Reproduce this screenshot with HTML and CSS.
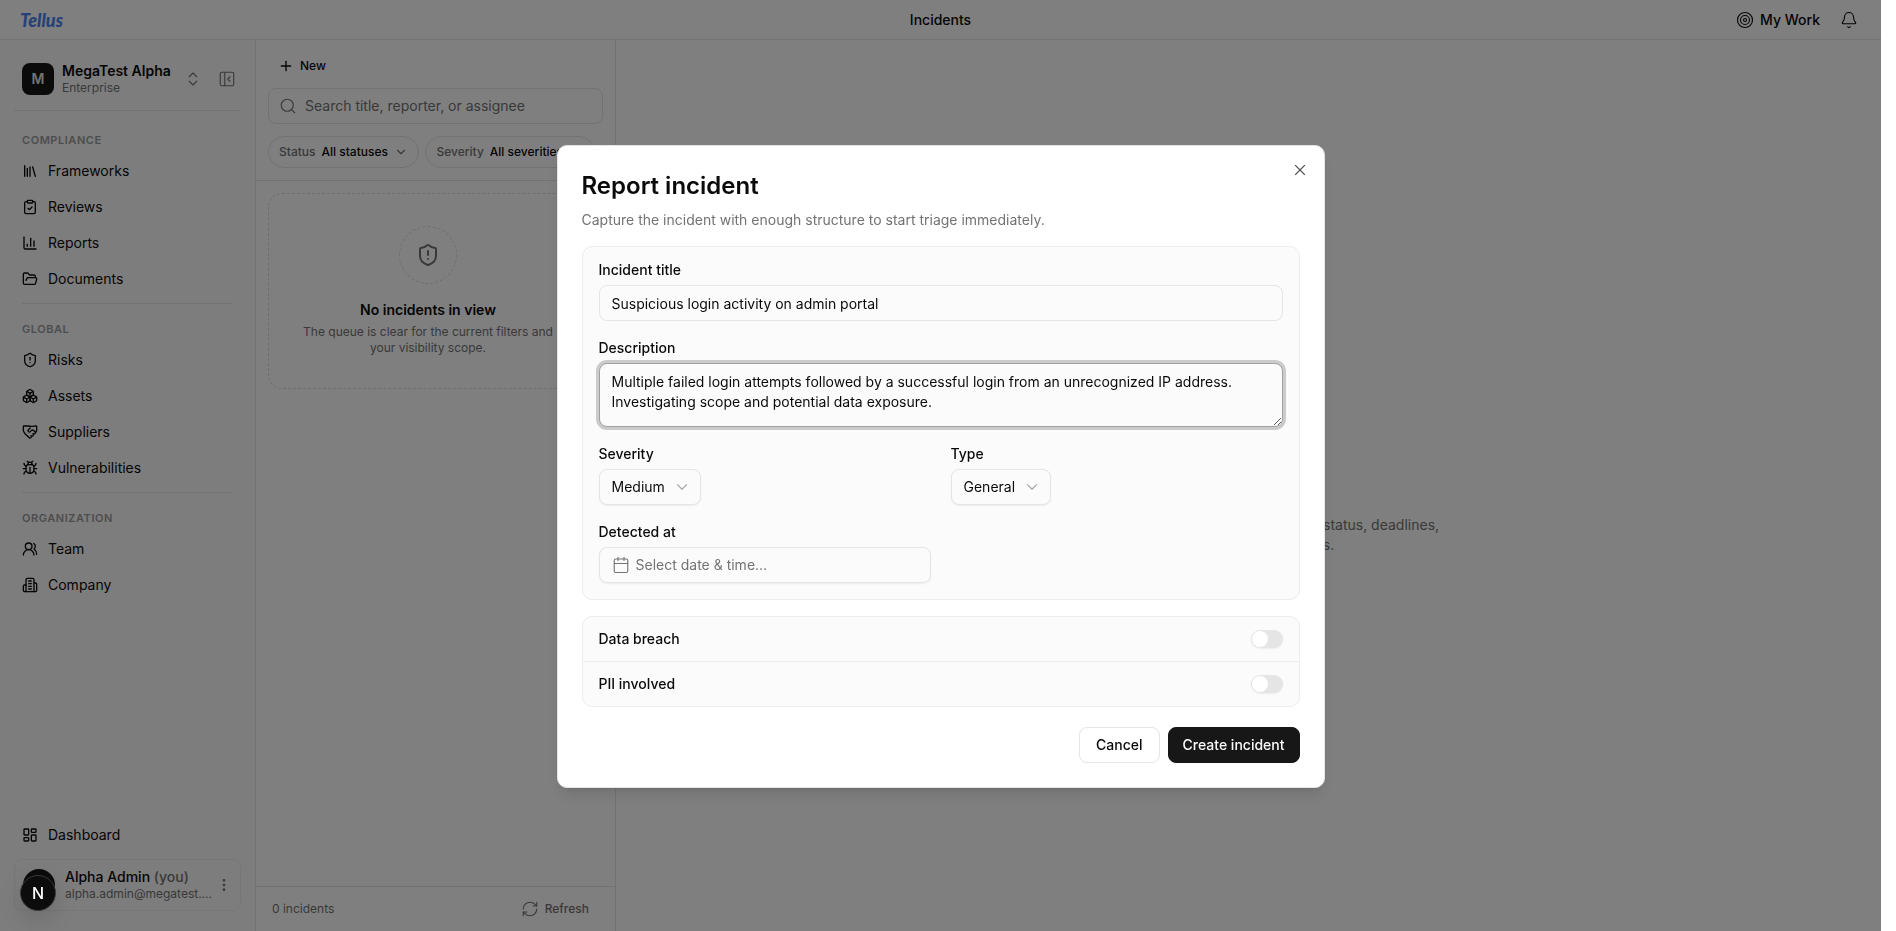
FILE: index.html
```html
<!DOCTYPE html>
<html lang="en">
<head>
    <meta charset="UTF-8">
    <meta name="viewport" content="width=device-width, initial-scale=1.0">
    <title>Incidents - Tellus</title>
    <link rel="stylesheet" href="styles.css">
</head>
<body>
    <div class="app">
        <header class="topbar">
            <a href="#" class="logo">Tellus</a>
            <h1>Incidents</h1>
            <div class="topbar-actions">
                <a href="#" class="my-work">
                    <svg class="icon icon-light" viewBox="0 0 24 24"><circle cx="12" cy="12" r="10"/><circle cx="12" cy="12" r="6"/><circle cx="12" cy="12" r="2"/></svg>
                    My Work
                </a>
                <button type="button" aria-label="Notifications">
                    <svg class="icon icon-light" viewBox="0 0 24 24"><path d="M10.268 21a2 2 0 0 0 3.464 0"/><path d="M3.262 15.326A1 1 0 0 0 4 17h16a1 1 0 0 0 .74-1.673C19.41 13.956 18 12.499 18 8A6 6 0 0 0 6 8c0 4.499-1.411 5.956-2.738 7.326"/></svg>
                </button>
            </div>
        </header>

        <div class="columns">
            <aside class="sidebar">
                <div class="workspace">
                    <span class="workspace-avatar">M</span>
                    <div class="workspace-name">
                        <strong>MegaTest Alpha</strong>
                        <span>Enterprise</span>
                    </div>
                    <button type="button" aria-label="Switch workspace">
                        <svg class="icon icon-light" viewBox="0 0 24 24"><path d="m7 15 5 5 5-5"/><path d="m7 9 5-5 5 5"/></svg>
                    </button>
                    <button type="button" aria-label="Collapse sidebar">
                        <svg class="icon icon-light" viewBox="0 0 24 24"><rect width="18" height="18" x="3" y="3" rx="2"/><path d="M9 3v18"/><path d="m16 15-3-3 3-3"/></svg>
                    </button>
                </div>

                <nav>
                    <section class="nav-group">
                        <h2>COMPLIANCE</h2>
                        <a href="#"><svg class="icon" viewBox="0 0 24 24"><path d="m16 6 4 14"/><path d="M12 6v14"/><path d="M8 8v12"/><path d="M4 4v16"/></svg>Frameworks</a>
                        <a href="#"><svg class="icon" viewBox="0 0 24 24"><rect width="8" height="4" x="8" y="2" rx="1"/><path d="M16 4h2a2 2 0 0 1 2 2v14a2 2 0 0 1-2 2H6a2 2 0 0 1-2-2V6a2 2 0 0 1 2-2h2"/><path d="m9 14 2 2 4-4"/></svg>Reviews</a>
                        <a href="#"><svg class="icon" viewBox="0 0 24 24"><path d="M3 3v16a2 2 0 0 0 2 2h16"/><path d="M18 17V9"/><path d="M13 17V5"/><path d="M8 17v-3"/></svg>Reports</a>
                        <a href="#"><svg class="icon" viewBox="0 0 24 24"><path d="m6 14 1.5-2.9A2 2 0 0 1 9.24 10H20a2 2 0 0 1 1.94 2.5l-1.54 6a2 2 0 0 1-1.95 1.5H4a2 2 0 0 1-2-2V5a2 2 0 0 1 2-2h3.9a2 2 0 0 1 1.69.9l.81 1.2a2 2 0 0 0 1.67.9H18a2 2 0 0 1 2 2v2"/></svg>Documents</a>
                    </section>
                    <section class="nav-group">
                        <h2>GLOBAL</h2>
                        <a href="#"><svg class="icon" viewBox="0 0 24 24"><path d="M20 13c0 5-3.5 7.5-7.66 8.95a1 1 0 0 1-.67-.01C7.5 20.5 4 18 4 13V6a1 1 0 0 1 1-1c2 0 4.5-1.2 6.24-2.72a1.17 1.17 0 0 1 1.52 0C14.51 3.81 17 5 19 5a1 1 0 0 1 1 1z"/><path d="M12 8v4"/><path d="M12 16h.01"/></svg>Risks</a>
                        <a href="#"><svg class="icon" viewBox="0 0 24 24"><path d="M2.97 12.92A2 2 0 0 0 2 14.63v3.24a2 2 0 0 0 .97 1.71l3 1.8a2 2 0 0 0 2.06 0L12 19v-5.5l-5-3-4.03 2.42Z"/><path d="m7 16.5-4.74-2.85"/><path d="m7 16.5 5-3"/><path d="M7 16.5v5.17"/><path d="M12 13.5V19l3.97 2.38a2 2 0 0 0 2.06 0l3-1.8a2 2 0 0 0 .97-1.71v-3.24a2 2 0 0 0-.97-1.71L17 10.5l-5 3Z"/><path d="m17 16.5-5-3"/><path d="m17 16.5 4.74-2.85"/><path d="M17 16.5v5.17"/><path d="M7.97 4.42A2 2 0 0 0 7 6.13v4.37l5 3 5-3V6.13a2 2 0 0 0-.97-1.71l-3-1.8a2 2 0 0 0-2.06 0l-3 1.8Z"/><path d="M12 8 7.26 5.15"/><path d="m12 8 4.74-2.85"/><path d="M12 13.5V8"/></svg>Assets</a>
                        <a href="#"><svg class="icon" viewBox="0 0 24 24"><path d="M19.414 14.414C21 12.828 22 11.5 22 9.5V4a1 1 0 0 0-1-1c-2.5 0-4 .6-6 .6S11 3 8.5 3H3a1 1 0 0 0-1 1v5.5c0 2.3 1.5 4 3 5.5l5.535 5.362a2 2 0 0 0 2.879.052 2.12 2.12 0 0 0-.004-3 2.124 2.124 0 1 0 3-3 2.124 2.124 0 0 0 3.004 0 2 2 0 0 0 0-2.828l-1.881-1.882a2.41 2.41 0 0 0-3.409 0l-1.71 1.71a2 2 0 0 1-2.828 0 2 2 0 0 1 0-2.828l2.823-2.762"/></svg>Suppliers</a>
                        <a href="#"><svg class="icon" viewBox="0 0 24 24"><path d="m8 2 1.88 1.88"/><path d="M14.12 3.88 16 2"/><path d="M9 7.13v-1a3 3 0 1 1 6 0v1"/><path d="M12 20c-3.3 0-6-2.7-6-6v-3a4 4 0 0 1 4-4h4a4 4 0 0 1 4 4v3c0 3.3-2.7 6-6 6"/><path d="M12 20v-9"/><path d="M6.53 9C4.6 8.8 3 7.1 3 5"/><path d="M6 13H2"/><path d="M3 21c0-2.1 1.7-3.9 3.8-4"/><path d="M20.97 5c0 2.1-1.6 3.8-3.5 4"/><path d="M22 13h-4"/><path d="M17.2 17c2.1.1 3.8 1.9 3.8 4"/></svg>Vulnerabilities</a>
                    </section>
                    <section class="nav-group">
                        <h2>ORGANIZATION</h2>
                        <a href="#"><svg class="icon" viewBox="0 0 24 24"><path d="M18 21a8 8 0 0 0-16 0"/><circle cx="10" cy="8" r="5"/><path d="M22 20c0-3.37-2-6.500-4-8a5 5 0 0 0-.45-8.300"/></svg>Team</a>
                        <a href="#"><svg class="icon" viewBox="0 0 24 24"><path d="M6 22V4a2 2 0 0 1 2-2h8a2 2 0 0 1 2 2v18Z"/><path d="M6 12H4a2 2 0 0 0-2 2v6a2 2 0 0 0 2 2h2"/><path d="M18 9h2a2 2 0 0 1 2 2v9a2 2 0 0 1-2 2h-2"/><path d="M10 6h4"/><path d="M10 10h4"/><path d="M10 14h4"/><path d="M10 18h4"/></svg>Company</a>
                    </section>
                </nav>

                <div class="sidebar-footer">
                    <a href="#"><svg class="icon" viewBox="0 0 24 24"><rect width="7" height="9" x="3" y="3" rx="1"/><rect width="7" height="5" x="14" y="3" rx="1"/><rect width="7" height="9" x="14" y="12" rx="1"/><rect width="7" height="5" x="3" y="16" rx="1"/></svg>Dashboard</a>
                    <div class="user-card">
                        <span class="user-avatar"></span>
                        <div class="user-info">
                            <p class="user-name">Alpha Admin <span>(you)</span></p>
                            <p class="user-email">alpha.admin@megatest.…</p>
                        </div>
                        <button type="button" aria-label="Account menu">
                            <svg class="icon" viewBox="0 0 24 24"><circle cx="12" cy="12" r="1"/><circle cx="12" cy="5" r="1"/><circle cx="12" cy="19" r="1"/></svg>
                        </button>
                    </div>
                </div>
            </aside>

            <section class="queue">
                <div class="queue-tools">
                    <button type="button" class="new-button">
                        <svg class="icon" viewBox="0 0 24 24"><path d="M5 12h14"/><path d="M12 5v14"/></svg>
                        New
                    </button>
                    <div class="search">
                        <svg class="icon icon-light" viewBox="0 0 24 24"><circle cx="11" cy="11" r="8"/><path d="m21 21-4.3-4.3"/></svg>
                        <input type="search" placeholder="Search title, reporter, or assignee" aria-label="Search incidents">
                    </div>
                    <div class="filters">
                        <div class="filter">
                            <label for="filter-status">Status</label>
                            <select id="filter-status"><option>All statuses</option></select>
                            <svg class="icon" viewBox="0 0 24 24"><path d="m6 9 6 6 6-6"/></svg>
                        </div>
                        <div class="filter">
                            <label for="filter-severity">Severity</label>
                            <select id="filter-severity"><option>All severities</option></select>
                            <svg class="icon" viewBox="0 0 24 24"><path d="m6 9 6 6 6-6"/></svg>
                        </div>
                    </div>
                </div>
                <div class="queue-list">
                    <div class="empty-card">
                        <span class="empty-icon">
                            <svg class="icon" viewBox="0 0 24 24"><path d="M20 13c0 5-3.5 7.5-7.66 8.95a1 1 0 0 1-.67-.01C7.5 20.5 4 18 4 13V6a1 1 0 0 1 1-1c2 0 4.5-1.2 6.24-2.72a1.17 1.17 0 0 1 1.52 0C14.51 3.81 17 5 19 5a1 1 0 0 1 1 1z"/><path d="M12 8v4"/><path d="M12 16h.01"/></svg>
                        </span>
                        <h3>No incidents in view</h3>
                        <p>The queue is clear for the current filters and your visibility scope.</p>
                    </div>
                </div>
                <footer class="queue-footer">
                    <span>0 incidents</span>
                    <button type="button">
                        <svg class="icon icon-light" viewBox="0 0 24 24"><path d="M3 12a9 9 0 0 1 9-9 9.75 9.75 0 0 1 6.74 2.74L21 8"/><path d="M21 3v5h-5"/><path d="M21 12a9 9 0 0 1-9 9 9.75 9.75 0 0 1-6.74-2.74L3 16"/><path d="M8 16H3v5"/></svg>
                        Refresh
                    </button>
                </footer>
            </section>

            <main class="detail">
                <div class="detail-empty">
                    <span class="empty-icon">
                        <svg class="icon" viewBox="0 0 24 24"><path d="M20 13c0 5-3.5 7.5-7.66 8.95a1 1 0 0 1-.67-.01C7.5 20.5 4 18 4 13V6a1 1 0 0 1 1-1c2 0 4.5-1.2 6.24-2.72a1.17 1.17 0 0 1 1.52 0C14.51 3.81 17 5 19 5a1 1 0 0 1 1 1z"/></svg>
                    </span>
                    <h3>Select an incident</h3>
                    <p>Pick an incident from the queue to view status, deadlines,<br>evidence and linked risks.</p>
                </div>
            </main>
        </div>
    </div>

    <div class="overlay">
        <form class="dialog" role="dialog" aria-modal="true" aria-labelledby="dialog-title">
            <button type="button" class="dialog-close" aria-label="Close">
                <svg class="icon icon-light" viewBox="0 0 24 24"><path d="M18 6 6 18"/><path d="m6 6 12 12"/></svg>
            </button>
            <h2 id="dialog-title">Report incident</h2>
            <p class="dialog-text">Capture the incident with enough structure to start triage immediately.</p>

            <div class="fields">
                <div class="field">
                    <label for="title">Incident title</label>
                    <input type="text" id="title" value="Suspicious login activity on admin portal">
                </div>
                <div class="field">
                    <label for="description">Description</label>
                    <textarea id="description">Multiple failed login attempts followed by a successful login from an unrecognized IP address. Investigating scope and potential data exposure.</textarea>
                </div>
                <div class="field-row">
                    <div class="field">
                        <label for="severity">Severity</label>
                        <div class="select">
                            <select id="severity">
                                <option>Low</option>
                                <option selected>Medium</option>
                                <option>High</option>
                            </select>
                            <svg class="icon icon-light" viewBox="0 0 24 24"><path d="m6 9 6 6 6-6"/></svg>
                        </div>
                    </div>
                    <div class="field">
                        <label for="type">Type</label>
                        <div class="select">
                            <select id="type">
                                <option>General</option>
                                <option>Other</option>
                            </select>
                            <svg class="icon icon-light" viewBox="0 0 24 24"><path d="m6 9 6 6 6-6"/></svg>
                        </div>
                    </div>
                    <div class="field">
                        <label for="detected">Detected at</label>
                        <button type="button" id="detected" class="date-button">
                            <svg class="icon icon-light" viewBox="0 0 24 24"><path d="M8 2v4"/><path d="M16 2v4"/><rect width="18" height="18" x="3" y="4" rx="2"/><path d="M3 10h18"/></svg>
                            Select date &amp; time…
                        </button>
                    </div>
                </div>
            </div>

            <div class="switches">
                <div class="switch-row">
                    <label for="breach">Data breach</label>
                    <input type="checkbox" role="switch" id="breach">
                </div>
                <div class="switch-row">
                    <label for="pii">PII involved</label>
                    <input type="checkbox" role="switch" id="pii">
                </div>
            </div>

            <div class="dialog-actions">
                <button type="button" class="btn">Cancel</button>
                <button type="submit" class="btn btn-primary">Create incident</button>
            </div>
        </form>
    </div>

    <button type="button" class="dev-badge" aria-label="Open dev tools">N</button>
</body>
</html>
```

FILE: styles.css
```css
* {
    box-sizing: border-box;
}

html {
    background: #fff;
}

body {
    margin: 0;
    font-family: Inter, "Liberation Sans", sans-serif;
    font-size: 14px;
    line-height: 20px;
    color: #0a0a0a;
}

h1, h2, h3, p {
    margin: 0;
}

a {
    color: inherit;
    text-decoration: none;
}

button, input, select, textarea {
    font: inherit;
    color: inherit;
}

button {
    display: inline-flex;
    align-items: center;
    padding: 0;
    border: none;
    background: none;
    cursor: pointer;
}

.icon {
    width: 16px;
    height: 16px;
    flex-shrink: 0;
    fill: none;
    stroke: currentColor;
    stroke-width: 2;
    stroke-linecap: round;
    stroke-linejoin: round;
}

.icon-light {
    width: 18px;
    height: 18px;
    stroke-width: 1.5;
}

.app {
    display: flex;
    flex-direction: column;
    height: 100vh;
    margin-right: 15px;
}

/* Top bar */
.topbar {
    display: grid;
    grid-template-columns: 1fr auto 1fr;
    align-items: center;
    height: 40px;
    padding: 0 20px;
    border-bottom: 1px solid #e5e5e5;
}

.topbar h1 {
    font-size: 14px;
    font-weight: 500;
}

.logo {
    font-family: Lato, sans-serif;
    font-size: 18px;
    font-style: italic;
    font-weight: 900;
    color: #4f83f1;
}

.topbar-actions {
    display: flex;
    justify-content: flex-end;
    align-items: center;
    gap: 20px;
    padding-right: 3px;
}

.my-work {
    display: flex;
    align-items: center;
    gap: 6px;
    font-weight: 500;
}

.columns {
    display: flex;
    flex: 1;
    min-height: 0;
}

/* Sidebar */
.sidebar {
    display: flex;
    flex-direction: column;
    width: 256px;
    flex-shrink: 0;
    padding: 0 14px 20px;
    border-right: 1px solid #e5e5e5;
    background: #fafafa;
}

.workspace {
    display: flex;
    align-items: center;
    padding: 22px 5px 14px 8px;
    border-bottom: 1px solid #e5e5e5;
    color: #737373;
}

.workspace-avatar {
    width: 32px;
    height: 32px;
    margin-right: 8px;
    border-radius: 8px;
    background: #171717;
    color: #e5e5e5;
    font-weight: 600;
    line-height: 32px;
    text-align: center;
}

.workspace-name {
    flex: 1;
    font-size: 12px;
    line-height: 16px;
    white-space: nowrap;
}

.workspace-name strong {
    display: block;
    color: #0a0a0a;
    font-size: 14px;
    font-weight: 600;
    line-height: 18px;
}

.workspace button + button {
    margin-left: 16px;
}

.sidebar nav {
    padding-top: 4px;
}

.nav-group {
    margin: 0 8px;
    padding: 10px 0 8px;
}

.nav-group + .nav-group {
    border-top: 1px solid #e5e5e5;
}

.nav-group h2 {
    color: #737373;
    opacity: 0.7;
    font-size: 11px;
    font-weight: 600;
    letter-spacing: 0.05em;
    line-height: 30px;
}

.nav-group a,
.sidebar-footer a {
    display: flex;
    align-items: center;
    gap: 10px;
    height: 32px;
}

.nav-group a + a {
    margin-top: 4px;
}

.sidebar-footer {
    margin-top: auto;
}

.sidebar-footer a {
    margin: 0 8px 8px;
}

.user-card {
    display: flex;
    align-items: center;
    height: 52px;
    padding: 0 8px;
    border: 1px solid #efefef;
    border-radius: 8px;
    color: #737373;
}

.user-avatar {
    width: 32px;
    height: 32px;
    flex-shrink: 0;
    margin-right: 10px;
    border-radius: 50%;
    background: #171717;
}

.user-info {
    flex: 1;
    min-width: 0;
    font-size: 12px;
}

.user-name {
    color: #0a0a0a;
    font-size: 14px;
    font-weight: 500;
    line-height: 18px;
    white-space: nowrap;
}

.user-name span {
    color: #737373;
}

.user-email {
    line-height: 16px;
    white-space: nowrap;
}

/* Incident queue */
.queue {
    display: flex;
    flex-direction: column;
    width: 360px;
    flex-shrink: 0;
    border-right: 1px solid #e5e5e5;
}

.queue-tools {
    padding: 12px;
    border-bottom: 1px solid #e5e5e5;
}

.new-button {
    gap: 6px;
    height: 28px;
    padding: 0 10px;
    font-size: 12px;
    font-weight: 500;
}

.search {
    display: flex;
    align-items: center;
    gap: 8px;
    height: 36px;
    margin: 8px 0 12px;
    padding: 0 10px;
    border: 1px solid #e5e5e5;
    border-radius: 8px;
    color: #737373;
}

.search input {
    flex: 1;
    min-width: 0;
    padding: 0;
    border: none;
    outline: none;
    background: none;
}

.search input::placeholder {
    color: #737373;
}

.filters {
    display: flex;
    gap: 6px;
    overflow: hidden;
}

.filter {
    display: flex;
    align-items: center;
    flex-shrink: 0;
    height: 32px;
    padding: 0 10px;
    border: 1px solid #e5e5e5;
    border-radius: 16px;
    color: #737373;
    font-size: 12px;
    font-weight: 500;
}

.filter select {
    margin: 0 6px;
    padding: 0;
    border: none;
    appearance: none;
    background: none;
    color: #0a0a0a;
}

.filter .icon {
    width: 14px;
    height: 14px;
}

.queue-list {
    flex: 1;
    padding: 12px 27px 12px 12px;
}

.empty-card {
    display: flex;
    flex-direction: column;
    align-items: center;
    padding: 32px 24px;
    border: 1px dashed #dcdcdc;
    border-radius: 14px;
    text-align: center;
}

.empty-icon {
    display: flex;
    align-items: center;
    justify-content: center;
    width: 58px;
    height: 58px;
    border: 1px dashed #dcdcdc;
    border-radius: 50%;
    color: #737373;
}

.empty-icon .icon {
    width: 24px;
    height: 24px;
}

.empty-card h3,
.detail-empty h3 {
    margin-top: 16px;
    font-size: 14px;
    font-weight: 600;
}

.empty-card p {
    margin-top: 4px;
    color: #737373;
    font-size: 12px;
    line-height: 16px;
}

.queue-footer {
    display: flex;
    align-items: center;
    justify-content: space-between;
    height: 45px;
    padding: 0 26px 0 16px;
    border-top: 1px solid #e5e5e5;
    color: #737373;
    font-size: 12px;
}

.queue-footer button {
    gap: 6px;
    font-weight: 500;
}

/* Detail pane */
.detail {
    display: flex;
    align-items: center;
    justify-content: center;
    flex: 1;
    min-width: 0;
}

.detail-empty {
    display: flex;
    flex-direction: column;
    align-items: center;
    text-align: center;
}

.detail-empty p {
    margin-top: 4px;
    color: #737373;
}

/* Dialog */
.overlay {
    position: fixed;
    inset: 0 15px 0 0;
    display: flex;
    align-items: center;
    justify-content: center;
    padding-top: 2px;
    background: rgba(0, 0, 0, 0.5);
}

.dialog {
    position: relative;
    width: 768px;
    max-width: 100%;
    padding: 24px;
    border: 1px solid #e5e5e5;
    border-radius: 10px;
    background: #fff;
    box-shadow: 0 10px 15px -3px rgba(0, 0, 0, 0.1), 0 4px 6px -4px rgba(0, 0, 0, 0.1);
}

.dialog-close {
    position: absolute;
    top: 15px;
    right: 15px;
    color: #525252;
}

.dialog h2 {
    font-size: 24px;
    font-weight: 600;
    line-height: 32px;
}

.dialog-text {
    margin: 8px 0 16px;
    color: #737373;
}

.fields {
    display: flex;
    flex-direction: column;
    gap: 20px;
    padding: 16px;
    border: 1px solid #ededed;
    border-radius: 10px;
    background: #fbfbfb;
}

.field {
    display: flex;
    flex-direction: column;
    align-items: flex-start;
    gap: 8px;
}

.field-row {
    display: grid;
    grid-template-columns: 1fr 1fr;
    gap: 20px;
}

.field label,
.switch-row label {
    font-weight: 500;
    line-height: 14px;
}

.field input,
.field textarea,
.field select,
.date-button {
    height: 36px;
    padding: 0 12px;
    border: 1px solid #e5e5e5;
    border-radius: 8px;
    outline: none;
    background: #fbfbfb;
}

.field input,
.field textarea,
.date-button {
    width: 100%;
}

.field textarea {
    height: 64px;
    padding: 8px 12px;
    border-color: #a1a1a1;
    box-shadow: 0 0 0 3px #cbcbcb;
    resize: vertical;
}

.select {
    position: relative;
}

.field select {
    display: block;
    padding-right: 34px;
    appearance: none;
    box-shadow: 0 1px 2px rgba(0, 0, 0, 0.06);
}

.select .icon {
    position: absolute;
    top: 9px;
    right: 10px;
    color: #a8a8a8;
    pointer-events: none;
}

.date-button {
    gap: 6px;
    color: #737373;
    box-shadow: 0 1px 2px rgba(0, 0, 0, 0.06);
}

.switches {
    margin: 16px 0 20px;
    border: 1px solid #ededed;
    border-radius: 10px;
    background: #fbfbfb;
}

.switch-row {
    display: flex;
    align-items: center;
    justify-content: space-between;
    height: 44px;
    padding: 0 16px;
}

.switch-row + .switch-row {
    height: 45px;
    border-top: 1px solid #ededed;
}

.switch-row input {
    width: 32px;
    height: 18px;
    margin: 0;
    padding: 1px;
    border-radius: 9px;
    appearance: none;
    background: #e5e5e5;
    box-shadow: 0 1px 2px rgba(0, 0, 0, 0.06);
}

.switch-row input::before {
    content: "";
    display: block;
    width: 16px;
    height: 16px;
    border-radius: 50%;
    background: #fff;
}

.switch-row input:checked {
    background: #171717;
}

.switch-row input:checked::before {
    margin-left: 14px;
}

.dialog-actions {
    display: flex;
    justify-content: flex-end;
    gap: 8px;
}

.btn {
    height: 36px;
    padding: 0 16px;
    border: 1px solid #e5e5e5;
    border-radius: 8px;
    font-weight: 500;
}

.btn-primary {
    padding: 0 14px;
    border-color: #171717;
    background: #171717;
    color: #fafafa;
}

/* Dev tools badge */
.dev-badge {
    position: fixed;
    left: 20px;
    bottom: 20px;
    justify-content: center;
    width: 36px;
    height: 36px;
    border: 1px solid #3a3a3a;
    border-radius: 50%;
    background: #0c0c0c;
    color: #fff;
    font-size: 16px;
    font-weight: 500;
    box-shadow: 0 8px 24px rgba(0, 0, 0, 0.14);
}
```
